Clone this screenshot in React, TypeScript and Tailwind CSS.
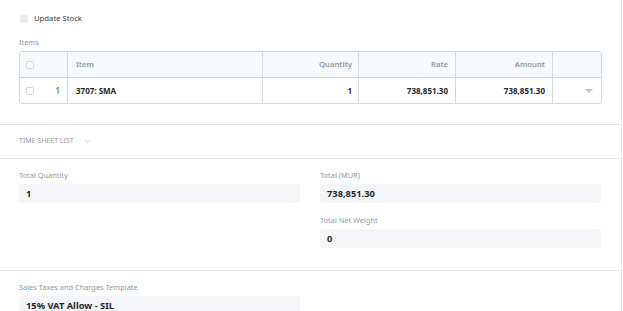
import { ChevronDown } from "lucide-react"

const font = { fontFamily: '"Noto Sans", "Open Sans", sans-serif' }

function Check({ className = "" }: { className?: string }) {
  return <span className={`inline-block h-[8px] w-[8px] rounded-[2px] border border-[#d1d8dd] bg-white ${className}`} />
}

function Field({ label, value, className = "" }: { label: string; value: string; className?: string }) {
  return (
    <div className={className}>
      <div className="h-[14px] text-[7.4px] leading-[14px] text-[#8d99a6]">{label}</div>
      <div className="mt-[2px] flex h-[19px] items-center rounded-[3px] bg-[#f4f5f8] pl-[7px] text-[9.3px] font-bold text-[#1f272e]">
        {value}
      </div>
    </div>
  )
}

export default function App() {
  return (
    <div className="h-[311px] w-[623px] overflow-hidden bg-white" style={font}>
      <div className="w-[622px] border-r border-[#e2e6e9]">
        {/* Items section */}
        <div className="border-b border-[#e2e6e9] px-[19px] pt-[13px] pb-[20px]">
          <div className="flex h-[12px] items-center gap-[6px] pl-[1px]">
            <span className="inline-block h-[8px] w-[8px] rounded-[2px] bg-[#e8ebee]" />
            <span className="text-[7.7px] text-[#36414c]">Update Stock</span>
          </div>
          <div className="mt-[10px] h-[14px] text-[7.4px] leading-[14px] text-[#8d99a6]">Items</div>
          <div className="mt-[2px] overflow-hidden rounded-[3px] border border-[#d1d8dd] text-[7.7px] font-semibold">
            <div className="grid h-[25px] grid-cols-[47px_195px_96px_97px_97px_1fr] bg-[#f7fafc] text-[#8d99a6]">
              <div className="flex items-center pl-[6px]">
                <Check />
              </div>
              <div className="flex items-center border-l border-[#d1d8dd] pl-[8px]">Item</div>
              <div className="flex items-center justify-end border-l border-[#d1d8dd] pr-[6px]">Quantity</div>
              <div className="flex items-center justify-end border-l border-[#d1d8dd] pr-[7px]">Rate</div>
              <div className="flex items-center justify-end border-l border-[#d1d8dd] pr-[7px]">Amount</div>
              <div className="border-l border-[#d1d8dd]" />
            </div>
            <div className="grid h-[26px] grid-cols-[47px_195px_96px_97px_97px_1fr] border-t border-[#d1d8dd] text-[8px] font-bold text-[#1f272e]">
              <div className="flex items-center justify-between pl-[6px] pr-[7px]">
                <Check />
                <span className="font-normal text-[#36414c]">1</span>
              </div>
              <div className="flex items-center border-l border-[#d1d8dd] pl-[8px]">3707: SMA</div>
              <div className="flex items-center justify-end border-l border-[#d1d8dd] pr-[6px]">1</div>
              <div className="flex items-center justify-end border-l border-[#d1d8dd] pr-[7px]">738,851.30</div>
              <div className="flex items-center justify-end border-l border-[#d1d8dd] pr-[7px]">738,851.30</div>
              <div className="flex items-center justify-end border-l border-[#d1d8dd] pr-[8px]">
                <span className="h-0 w-0 border-x-[4px] border-t-[4px] border-x-transparent border-t-[#c0c6cc]" />
              </div>
            </div>
          </div>
        </div>

        {/* Time sheet list */}
        <div className="flex h-[34px] items-center gap-[9px] border-b border-[#e2e6e9] px-[19px]">
          <span className="text-[7px] uppercase text-[#8d99a6]">Time Sheet List</span>
          <ChevronDown className="h-[9px] w-[9px] text-[#a9b2bb]" strokeWidth={1.5} />
        </div>

        {/* Totals */}
        <div className="grid h-[112px] grid-cols-2 gap-x-[20px] border-b border-[#e2e6e9] px-[19px] pt-[9px] pr-[20px]">
          <Field label="Total Quantity" value="1" />
          <div className="flex flex-col gap-[10px]">
            <Field label="Total (MUR)" value="738,851.30" />
            <Field label="Total Net Weight" value="0" />
          </div>
        </div>

        {/* Taxes */}
        <div className="px-[19px] pt-[9px]">
          <Field label="Sales Taxes and Charges Template" value="15% VAT Allow - SIL" className="w-[281px]" />
        </div>
      </div>
    </div>
  )
}
